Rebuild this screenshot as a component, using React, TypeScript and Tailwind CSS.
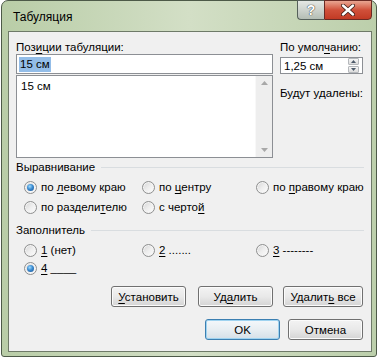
import React from "react";

const FONT = "font-['Liberation_Sans',Arial,sans-serif]";

function K({ children }: { children: React.ReactNode }) {
  return <span className="underline decoration-1 underline-offset-[2px]">{children}</span>;
}

function Radio({ checked }: { checked?: boolean }) {
  return (
    <span className="w-[13px] h-[13px] rounded-full border border-[#8e8f8f] bg-linear-to-br from-[#d4d4d4] via-[#eeeeee] to-[#fdfdfd] flex items-center justify-center shrink-0 shadow-[inset_0_0_0_1px_#f4f4f4]">
      {checked && (
        <span className="w-[7px] h-[7px] rounded-full bg-[radial-gradient(circle_at_40%_35%,#9fdcff_0%,#3b8bd0_45%,#174f8f_100%)]" />
      )}
    </span>
  );
}

function Option({ checked, children }: { checked?: boolean; children: React.ReactNode }) {
  return (
    <div className="flex items-center gap-[4px] whitespace-nowrap">
      <Radio checked={checked} />
      <span>{children}</span>
    </div>
  );
}

function GroupTitle({ children }: { children: React.ReactNode }) {
  return (
    <div className="flex items-center h-[14px] pl-[7px] pr-[7px] gap-[6px]">
      <span className="whitespace-nowrap">{children}</span>
      <span className="flex-1 h-px bg-[#d9dde0]" />
    </div>
  );
}

function Btn({ w, primary, children }: { w: string; primary?: boolean; children: React.ReactNode }) {
  const base =
    "h-[21px] rounded-[3px] border flex items-center justify-center text-black shrink-0 whitespace-nowrap";
  return primary ? (
    <div className={`${base} ${w} border-[#3c7fb1] bg-linear-to-b from-[#f4f8fb] via-[#e8eef2] to-[#d5e0e8] shadow-[inset_0_0_0_1px_#9fd3f0]`}>
      <span>{children}</span>
    </div>
  ) : (
    <div className={`${base} ${w} border-[#707070] bg-linear-to-b from-[#f3f3f3] via-[#e9e9e9] to-[#d4d4d4] shadow-[inset_0_0_0_1px_#fbfbfb]`}>
      <span>{children}</span>
    </div>
  );
}

export default function App() {
  return (
    <div className={`w-[379px] h-[358px] bg-white ${FONT} text-[11.5px] text-black leading-[14px]`}>
      <div className="w-[376px] h-[357px] ml-[1px] rounded-t-[7px] rounded-b-[3px] border border-[#4d5a48] bg-linear-to-r from-[#b9cda7] via-[#d3dfc6] to-[#bccfab] flex flex-col">
        {/* title bar */}
        <div className="h-[30px] flex items-start shrink-0">
          <div className="pl-[11px] pt-[9px] text-[12px] text-black flex-1">Табуляция</div>
          <div className="flex mr-[4px] -mt-px">
            <div className="w-[27px] h-[20px] rounded-bl-[4px] border border-[#55605a] border-r-0 bg-linear-to-b from-[#e4e8e4] via-[#cdd3cd] to-[#b4bdb4] flex items-center justify-center">
              <span className="text-[14px] font-bold text-white leading-none [text-shadow:0_0_1px_#333,0_0_1px_#333]">?</span>
            </div>
            <div className="w-[48px] h-[20px] rounded-br-[4px] border border-[#6a2a24] bg-linear-to-b from-[#e8a592] via-[#d0503a] to-[#c23a24] flex items-center justify-center">
              <svg width="14" height="12" viewBox="0 0 14 12">
                <path d="M2 1.5 L12 10.5 M12 1.5 L2 10.5" stroke="#3a1a14" strokeWidth="4" strokeLinecap="round" />
                <path d="M2 1.5 L12 10.5 M12 1.5 L2 10.5" stroke="#ffffff" strokeWidth="2.4" strokeLinecap="round" />
              </svg>
            </div>
          </div>
        </div>

        {/* client */}
        <div className="ml-[6px] mr-[4px] h-[321px] border border-[#6e7a68] bg-[#f0f0f0] flex flex-col">
          {/* top area */}
          <div className="flex pl-[7px] pt-[8px]">
            <div className="w-[257px] flex flex-col">
              <div className="h-[14px]">
                Поз<K>и</K>ции табуляции:
              </div>
              <div className="h-[20px] border border-[#8c8f94] bg-white flex items-center pl-[2px]">
                <span className="bg-[#93bde8] px-[1px] leading-[15px]">15 см</span>
              </div>
              <div className="mt-px h-[83px] border border-[#8c8f94] bg-white flex">
                <div className="flex-1 pl-[4px] pt-[3px]">15 см</div>
                <div className="w-[17px] bg-[#eeeeee] border-l border-[#f8f8f8] flex flex-col justify-between items-center py-[5px]">
                  <svg width="7" height="4" viewBox="0 0 7 4"><path d="M0 4 L3.5 0 L7 4 Z" fill="#a8a8a8" /></svg>
                  <svg width="7" height="4" viewBox="0 0 7 4"><path d="M0 0 L3.5 4 L7 0 Z" fill="#a8a8a8" /></svg>
                </div>
              </div>
            </div>
            <div className="ml-[7px] w-[83px] flex flex-col">
              <div className="h-[14px] whitespace-nowrap">
                По умол<K>ч</K>анию:
              </div>
              <div className="mt-[3px] h-[17px] border border-[#8c8f94] bg-white flex items-center">
                <span className="flex-1 pl-[3px]">1,25 см</span>
                <div className="w-[11px] h-[15px] mr-[3px] flex flex-col gap-px">
                  <div className="flex-1 rounded-[1px] border border-[#b5b8bc] bg-linear-to-b from-[#f6f6f6] to-[#dcdcdc] flex items-center justify-center">
                    <svg width="5" height="3" viewBox="0 0 5 3"><path d="M0 3 L2.5 0 L5 3 Z" fill="#4d5a6a" /></svg>
                  </div>
                  <div className="flex-1 rounded-[1px] border border-[#b5b8bc] bg-linear-to-b from-[#f6f6f6] to-[#dcdcdc] flex items-center justify-center">
                    <svg width="5" height="3" viewBox="0 0 5 3"><path d="M0 0 L2.5 3 L5 0 Z" fill="#4d5a6a" /></svg>
                  </div>
                </div>
              </div>
              <div className="mt-[12px] whitespace-nowrap">Будут удалены:</div>
            </div>
          </div>

          {/* alignment */}
          <div className="mt-[2px]">
            <GroupTitle>Выравнивание</GroupTitle>
          </div>
          <div className="mt-[3px] pl-[15px] grid grid-cols-[118px_114px_1fr] grid-rows-[20px_20px] items-center">
            <Option checked>по <K>л</K>евому краю</Option>
            <Option>по <K>ц</K>ентру</Option>
            <Option>по <K>п</K>равому краю</Option>
            <Option>по раздели<K>т</K>елю</Option>
            <Option>с черто<K>й</K></Option>
          </div>

          {/* leader */}
          <div className="mt-[6px]">
            <GroupTitle>Заполнитель</GroupTitle>
          </div>
          <div className="mt-[4px] pl-[15px] grid grid-cols-[118px_114px_1fr] grid-rows-[18px_18px] items-center">
            <Option><K>1</K> (нет)</Option>
            <Option><K>2</K> .......</Option>
            <Option><K>3</K> --------</Option>
            <Option checked><K>4</K> ____</Option>
          </div>

          {/* buttons */}
          <div className="mt-[9px] flex justify-end pr-[8px]">
            <Btn w="w-[75px]"><K>У</K>становить</Btn>
            <div className="w-[12px]" />
            <Btn w="w-[75px]">Уд<K>а</K>лить</Btn>
            <div className="w-[10px]" />
            <Btn w="w-[80px]">Удалит<K>ь</K> все</Btn>
          </div>
          <div className="mt-[12px] flex justify-end pr-[8px]">
            <Btn w="w-[75px]" primary>OK</Btn>
            <div className="w-[8px]" />
            <Btn w="w-[75px]">Отмена</Btn>
          </div>
        </div>
      </div>
    </div>
  );
}
